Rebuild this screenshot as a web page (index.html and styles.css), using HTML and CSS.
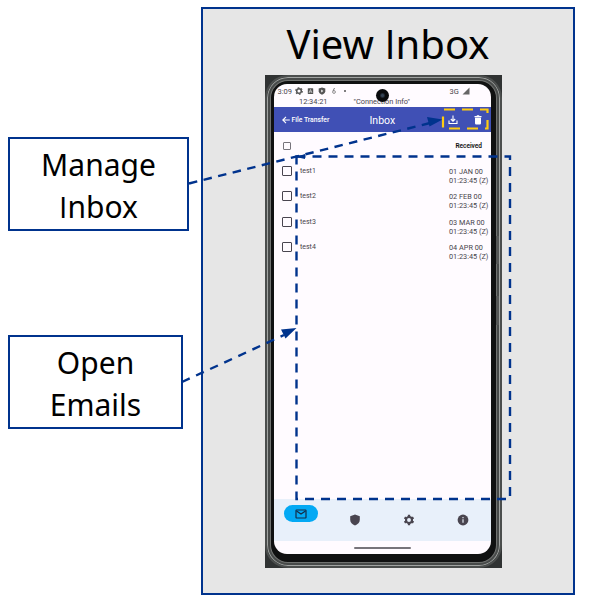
FILE: index.html
```html
<!DOCTYPE html>
<html lang="en">
<head>
<meta charset="utf-8">
<title>View Inbox</title>
<link rel="stylesheet" href="styles.css">
</head>
<body>
<main class="guide">
  <aside class="notes">
    <div class="note note-manage"><span class="w-manage">Manage</span><span class="w-inbox"><i>I</i>nbox</span></div>
    <div class="note note-open"><span class="w-open">Open</span><span class="w-emails">Emails</span></div>
  </aside>
  <section class="panel">
    <h1>View <i>I</i>nbox</h1>
    <div class="phone">
      <div class="bezel">
      <div class="screen">
        <header class="status">
          <div class="status-row">
            <span class="clock">3:09</span>
            <svg class="status-icons" width="60" height="10" viewBox="0 0 60 10">
              <circle cx="5" cy="5" r="2.3" fill="none" stroke="#555" stroke-width="1.5"/>
              <circle cx="5" cy="5" r="3.3" fill="none" stroke="#555" stroke-width="1.1" stroke-dasharray="1.7 1.75"/>
              <rect x="13.8" y="2.2" width="5.4" height="5.8" rx=".6" fill="#555"/><path d="M15 7l1.5-3.5L18 7M15.5 5.8h2" fill="none" stroke="#ddd" stroke-width=".7"/>
              <path d="M28 1.500l3.300 1v2.800c0 1.600-1.300 2.700-3.300 3.400-2-.7-3.300-1.800-3.300-3.400V2.500z" fill="#555"/><path d="M27.200 3.600l2.200 1.400-2.200 1.400z" fill="#eee"/>
              <path d="M40.500 2l-1.500 3" fill="none" stroke="#777" stroke-width="1"/><circle cx="40" cy="6" r="1.400" fill="none" stroke="#777" stroke-width=".8"/>
              <circle cx="51" cy="5" r="1" fill="#555"/>
            </svg>
            <span class="net">3G</span>
            <svg width="8" height="8" viewBox="0 0 8 8"><path d="M7.500 .5v7H.5z" fill="#666"/></svg>
          </div>
          <div class="info-row"><span>12:34:21</span><span class="conn">"Connection Info"</span></div>
          <span class="camera"></span>
        </header>
        <nav class="appbar">
          <svg width="8" height="8" viewBox="0 0 8 8"><path d="M7.800 4H1M4 .8L.8 4 4 7.200" fill="none" stroke="#fff" stroke-width="1.100"/></svg>
          <span class="back">File Transfer</span>
          <span class="title">Inbox</span>
          <svg class="download" width="10" height="10" viewBox="0 0 10 10"><path d="M5 .5v5.500M2.800 4L5 6.200 7.200 4M1 5.500v3h8v-3" fill="none" stroke="#fff" stroke-width="1.100"/></svg>
          <svg class="trash" width="8" height="10" viewBox="0 0 8 10"><path d="M.5 1h2l.6-.7h1.800l.6.700h2v1.200h-7zM1 2.700h6v5.600q0 1.200-1.200 1.200H2.200Q1 9.500 1 8.300z" fill="#fff"/></svg>
        </nav>
        <div class="columns"><span class="check small"></span><b>Received</b></div>
        <ul class="mails">
          <li><span class="check"></span><span class="name">test1</span><time>01 JAN 00<br>01:23:45 (Z)</time></li>
          <li><span class="check"></span><span class="name">test2</span><time>02 FEB 00<br>01:23:45 (Z)</time></li>
          <li><span class="check"></span><span class="name">test3</span><time>03 MAR 00<br>01:23:45 (Z)</time></li>
          <li><span class="check"></span><span class="name">test4</span><time>04 APR 00<br>01:23:45 (Z)</time></li>
        </ul>
        <footer class="tabs">
          <span class="tab"><span class="pill"><svg width="12" height="10" viewBox="0 0 12 10"><rect x="1" y="1" width="10" height="8" rx=".5" fill="none" stroke="#142c46" stroke-width="1.200"/><path d="M1.500 2L6 5l4.500-3" fill="none" stroke="#142c46" stroke-width="1.200"/></svg></span></span>
          <span class="tab"><svg width="12" height="12" viewBox="0 0 12 12"><path d="M6 .4l4.800 1.800v3.600c0 2.800-2 4.800-4.800 5.800C3.200 10.600 1.200 8.600 1.200 5.800V2.200z" fill="#49454f"/></svg></span>
          <span class="tab"><svg width="12" height="12" viewBox="0 0 12 12"><circle cx="6" cy="6" r="3" fill="none" stroke="#49454f" stroke-width="2.100"/><path d="M6 .8v2M6 9.200v2M1.500 3.400l1.700 1M8.800 7.600l1.700 1M1.500 8.600l1.700-1M8.800 4.400l1.700-1" stroke="#49454f" stroke-width="2.300"/></svg></span>
          <span class="tab"><svg width="12" height="12" viewBox="0 0 12 12"><circle cx="6" cy="6" r="5.400" fill="#49454f"/><path d="M6 5.200v3.600M6 2.900v1.400" stroke="#d9dde6" stroke-width="1.300"/></svg></span>
        </footer>
        <div class="gesture"><span></span></div>
      </div>
      </div>
    </div>
  </section>
  <svg class="overlay" width="590" height="601" viewBox="0 0 590 601">
    <rect x="496" y="236" width="3" height="28" fill="#555756"/><rect x="496" y="296" width="3" height="29" fill="#555756"/>
    <g fill="none" stroke="#00338d" stroke-width="2.400">
      <path d="M296.500 156.500H510V499H296.500z" stroke-dasharray="9 7"/>
      <path d="M189 183.500L430 123" stroke-dasharray="8.500 6.500"/>
      <path d="M182 382L284 335" stroke-dasharray="8.500 7"/>
    </g>
    <path d="M442.500 119.500l-15.500-2.500 2.500 9.500zM296.500 328l-15.500 1.500 4.500 9zM296 157l9-3v5z" fill="#00338d"/>
    <rect x="443" y="109.500" width="44.500" height="19" fill="none" stroke="#fc1" stroke-width="2.200" stroke-dasharray="11 7" stroke-dashoffset="-1"/>
  </svg>
</main>
</body>
</html>
```
FILE: styles.css
```css
* { box-sizing: border-box; }
body { margin: 0; background: #fff; font-family: "Noto Sans", sans-serif; color: #000; }
i { font-family: "Open Sans", sans-serif; font-style: normal; }
svg { display: block; flex: none; }
.guide { position: relative; display: flex; width: 590px; height: 601px; overflow: hidden; }
.notes { width: 201px; padding: 137px 0 0 8px; flex: none; }
.note { display: flex; flex-direction: column; align-items: center; height: 94px; padding-top: 5px; border: 2px solid #00338d; font-size: 30px; line-height: 42px; }
.note-manage { width: 181px; }
.note-open { width: 175px; margin-top: 104px; padding-top: 5px; }
.panel { width: 374px; height: 588px; margin-top: 7px; border: 2.500px solid #00338d; background: #e6e6e6; display: flex; flex-direction: column; align-items: center; flex: none; }
h1 { margin: 8px 0 0; height: 58px; font-size: 40px; line-height: 54px; font-weight: 400; white-space: nowrap; }
.phone { width: 237px; height: 493px; margin-right: 9px; background: #303333; flex: none; }
.bezel { height: 493px; padding: 7px 8.500px 11px 6px; border: 2px solid #4b4e4d; border-radius: 23px; background: #101111; box-shadow: inset 0 0 0 1px #a0a3a1, inset 0 0 0 3px #474a49, inset 0 0 0 4px #707270; }
.screen { position: relative; height: 470px; width: 217px; margin-left: 1px; border-radius: 13px; overflow: hidden; background: #fffbff; font-family: Roboto, sans-serif; font-size: 7px; color: #47444b; display: flex; flex-direction: column; }
.status { position: relative; height: 23px; }
.status-row { display: flex; align-items: center; height: 14px; padding-left: 3.500px; font-size: 7.500px; }
.status-icons { margin-left: 1px; }
.clock { width: 15px; }
.net { margin-left: 96px; width: 12px; }
.info-row { display: flex; padding-left: 25px; line-height: 8px; font-size: 7.400px; }
.conn { margin-left: 26px; }
.camera { position: absolute; left: 102px; top: 5px; width: 13px; height: 13px; border-radius: 50%; background: radial-gradient(circle, #344354 0 1px, #090b0d 3px); }
.appbar { display: flex; align-items: center; height: 25px; padding-left: 8px; background: #4050b5; color: #fff; }
.back { width: 78px; margin-left: 1.500px; font-size: 6.800px; font-weight: 500; white-space: nowrap; }
.title { width: 78.500px; font-size: 10.500px; padding-top: 1px; }
.trash { margin-left: 16px; }
.columns { display: flex; justify-content: space-between; align-items: center; height: 28px; padding: 0 9px 0 9px; color: #111; font-size: 6.500px; font-weight: 500; }
.columns b { font-weight: 600; }
.check { width: 10px; height: 10px; border: 1px solid #49454f; border-radius: 1px; flex: none; }
.small { width: 8px; height: 8px; border-color: #77747b; }
.mails { list-style: none; margin: 0; padding: 5px 0 0; flex: 1; }
.mails li { display: flex; height: 25.400px; padding-left: 8px; line-height: 9px; }
.mails .check { margin-top: 1px; }
.name { margin: 2px 0 0 8px; width: 149px; }
.mails time { white-space: nowrap; margin-top: 2px; font-size: 7.300px; }
.tabs { display: grid; grid-template-columns: repeat(4, 54px); height: 42px; background: #e8f0fa; }
.tab { display: flex; justify-content: center; padding-top: 15px; }
.pill { display: flex; align-items: center; justify-content: center; width: 34px; height: 17px; margin-top: -9px; border-radius: 9px; background: #03a9f4; }
.gesture { display: flex; justify-content: center; height: 13px; padding-top: 6px; }
.gesture span { width: 57px; height: 2px; border-radius: 1px; background: #77747a; }
.overlay { position: absolute; left: 0; top: 0; pointer-events: none; }
```
